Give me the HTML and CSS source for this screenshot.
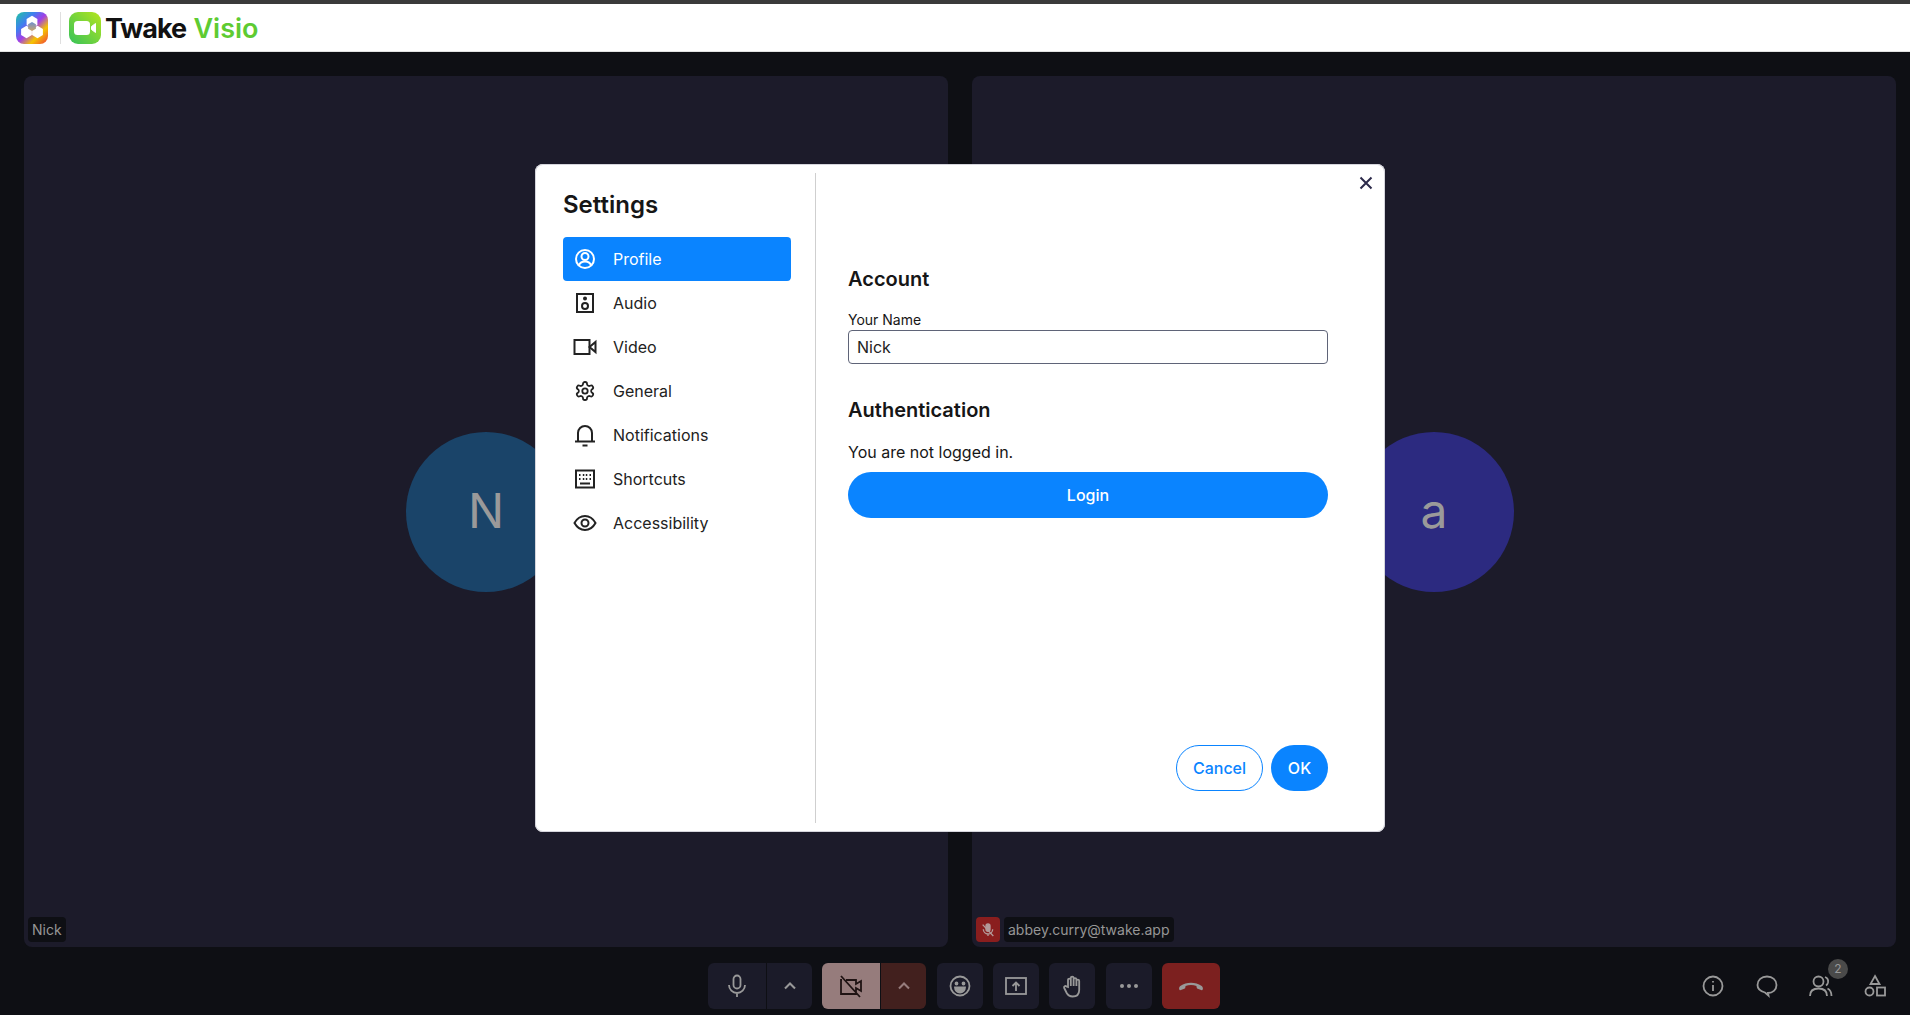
FILE: index.html
```html
<!DOCTYPE html>
<html lang="en">
<head>
    <meta charset="UTF-8">
    <title>Twake Visio</title>
    <link rel="stylesheet" href="styles.css">
</head>
<body>

<!-- Header -->
<header class="topbar">
    <svg class="logo" viewBox="0 0 32 32">
        <defs>
            <linearGradient id="appGrad" x1="0" y1="0" x2="1" y2="1">
                <stop offset="0" stop-color="#1fc7a0"/>
                <stop offset="0.3" stop-color="#3f7ff0"/>
                <stop offset="0.5" stop-color="#a03fe8"/>
                <stop offset="0.72" stop-color="#f5c400"/>
                <stop offset="1" stop-color="#f03c3c"/>
            </linearGradient>
            <linearGradient id="hexGrad" x1="0" y1="0" x2="0" y2="1">
                <stop offset="0" stop-color="#6f8fd0"/>
                <stop offset="1" stop-color="#c9a66a"/>
            </linearGradient>
        </defs>
        <rect width="32" height="32" rx="8" fill="url(#appGrad)"/>
        <polygon points="16,3.800 21.400,6.900 21.400,13.100 16,16.200 10.600,13.100 10.600,6.900" fill="#fff"/>
        <polygon points="10.500,13.800 15.900,16.900 15.900,23.100 10.500,26.200 5.100,23.100 5.100,16.900" fill="#fff"/>
        <polygon points="21.500,13.800 26.900,16.900 26.900,23.100 21.500,26.200 16.100,23.100 16.100,16.900" fill="#fff"/>
        <polygon points="16,10 19.900,12.250 19.900,16.750 16,19 12.100,16.750 12.100,12.250" fill="url(#hexGrad)"/>
    </svg>
    <span class="topbar-sep"></span>
    <svg class="logo" viewBox="0 0 32 32">
        <defs>
            <linearGradient id="visioGrad" x1="1" y1="0" x2="0" y2="1">
                <stop offset="0" stop-color="#b5e51d"/>
                <stop offset="1" stop-color="#35c25a"/>
            </linearGradient>
        </defs>
        <rect width="32" height="32" rx="9" fill="url(#visioGrad)"/>
        <rect x="5" y="9" width="16" height="14" rx="3.500" fill="#fff"/>
        <path d="M22.500 14.500l4-3v9l-4-3z" fill="#fff" stroke="#fff" stroke-linejoin="round"/>
    </svg>
    <span class="brand">Twake <span class="brand-green">Visio</span></span>
</header>

<!-- Call area -->
<main class="stage">
    <section class="tile">
        <div class="avatar avatar-blue">N</div>
        <div class="tile-label"><span class="tile-name">Nick</span></div>
    </section>
    <section class="tile">
        <div class="avatar avatar-indigo">a</div>
        <div class="tile-label">
            <span class="mic-off">
                <svg viewBox="0 0 24 24" class="mic-off-icon">
                    <rect x="9" y="3" width="6" height="11" rx="3" fill="currentColor"/>
                    <path d="M5 11a7 7 0 0 0 14 0M12 18v3M4 4l16 17"/>
                </svg>
            </span>
            <span class="tile-name">abbey.curry@twake.app</span>
        </div>
    </section>
</main>

<!-- Toolbar -->
<footer class="toolbar">
    <div></div>
    <div class="controls">
        <div class="split">
            <button class="ctl ctl-main">
                <svg viewBox="0 0 24 24"><rect x="8.500" y="1.500" width="7" height="13" rx="3.500"/><path d="M4 11a8 8 0 0 0 16 0M12 19v4"/></svg>
            </button>
            <button class="ctl ctl-arrow">
                <svg viewBox="0 0 24 24"><path d="M6 15l6-6 6 6"/></svg>
            </button>
        </div>
        <div class="split split-off">
            <button class="ctl ctl-main">
                <svg viewBox="0 0 24 24"><path d="M7 6h10v4l5-3v10l-5-3v6H2V6h1M2 2l19 21"/></svg>
            </button>
            <button class="ctl ctl-arrow">
                <svg viewBox="0 0 24 24"><path d="M6 15l6-6 6 6"/></svg>
            </button>
        </div>
        <button class="ctl ctl-single">
            <svg viewBox="0 0 24 24"><circle cx="12" cy="12" r="9.500"/><circle cx="8.500" cy="9.500" r="1" fill="currentColor"/><circle cx="15.500" cy="9.500" r="1" fill="currentColor"/><path d="M7 13.500h10a5 5 0 0 1-10 0z" fill="currentColor"/></svg>
        </button>
        <button class="ctl ctl-single">
            <svg viewBox="0 0 24 24"><rect x="2" y="4" width="20" height="16"/><path d="M12 17V9M8.500 12L12 8.500l3.500 3.500"/></svg>
        </button>
        <button class="ctl ctl-single">
            <svg viewBox="0 0 24 24"><path d="M8 13V6a1.400 1.400 0 0 1 2.800 0V4a1.400 1.400 0 0 1 2.800 0v1.500a1.400 1.400 0 0 1 2.800 0V7a1.400 1.400 0 0 1 2.800 0v9c0 4-2.500 6.500-6.500 6.500-3 0-4.800-1.300-6-3.500l-2.500-5c-.8-1.600 1.300-2.700 2.300-1.500zM10.800 6v6M13.600 5.500V12M16.400 6v6"/></svg>
        </button>
        <button class="ctl ctl-single">
            <svg viewBox="0 0 24 24"><circle cx="5" cy="12" r="2" class="dot"/><circle cx="12" cy="12" r="2" class="dot"/><circle cx="19" cy="12" r="2" class="dot"/></svg>
        </button>
        <button class="ctl ctl-hangup">
            <svg viewBox="0 0 24 24"><path d="M1 14.500c0-1 .5-2 1.500-2.700C5 10 8.500 9 12 9s7 1 9.500 2.800c1 .7 1.500 1.700 1.500 2.700 0 .8-.8 1.700-1.700 1.300l-3.100-1.200c-.7-.3-1-.8-1-1.500l-.2-1.200C15.500 11.300 13.800 11 12 11s-3.500.3-5 .9l-.2 1.200c0 .7-.3 1.200-1 1.500l-3.100 1.200c-.9.4-1.700-.5-1.700-1.300z" class="dot"/></svg>
        </button>
    </div>
    <div class="side-tools">
        <svg viewBox="0 0 24 24"><circle cx="12" cy="12" r="9.500"/><path d="M12 11v6M12 7v1.500"/></svg>
        <svg viewBox="0 0 24 24"><path d="M12 2.500c5.500 0 9.500 3.500 9.500 8.500s-4 8-8.500 8l.5 2.500-3.500-3C6 17.500 2.500 15 2.500 11 2.500 6 6.500 2.500 12 2.500z"/></svg>
        <div class="people">
            <svg viewBox="0 0 24 24"><circle cx="9.500" cy="7.500" r="5"/><path d="M1 22c0-5 3.500-7.500 8.500-7.500S18 17 18 22M16 3c2.500 1 3.500 3 3 5.500-.3 1.300-1 2.300-2 3M18.500 14.500c2.700 1.300 4 3.800 4 7.500"/></svg>
            <span class="count">2</span>
        </div>
        <svg viewBox="0 0 24 24"><path d="M12 2l4.500 8h-9z"/><circle cx="6.500" cy="17.500" r="4"/><rect x="14" y="13.500" width="8" height="8"/></svg>
    </div>
</footer>

<!-- Settings dialog -->
<div class="modal">
    <aside class="modal-side">
        <h2 class="modal-title">Settings</h2>
        <nav class="menu">
            <a class="menu-item active">
                <svg viewBox="0 0 24 24"><circle cx="12" cy="12" r="9"/><circle cx="12" cy="9.500" r="3.500"/><path d="M5.500 19c1-3 3.500-4.500 6.500-4.500s5.500 1.500 6.500 4.500"/></svg>
                Profile
            </a>
            <a class="menu-item">
                <svg viewBox="0 0 24 24"><rect x="4" y="3" width="16" height="18"/><circle cx="12" cy="15" r="3"/><circle cx="12" cy="7.500" r="1" fill="currentColor"/></svg>
                Audio
            </a>
            <a class="menu-item">
                <svg viewBox="0 0 24 24"><rect x="1.500" y="5" width="15" height="14"/><path d="M16.500 12l6-5v10z"/></svg>
                Video
            </a>
            <a class="menu-item">
                <svg viewBox="0 0 24 24"><g transform="translate(1.200 1.200) scale(.9)"><path d="M12.220 2h-.44a2 2 0 0 0-2 2v.18a2 2 0 0 1-1 1.730l-.43.250a2 2 0 0 1-2 0l-.15-.08a2 2 0 0 0-2.730.730l-.22.380a2 2 0 0 0 .730 2.730l.15.100a2 2 0 0 1 1 1.720v.510a2 2 0 0 1-1 1.740l-.15.090a2 2 0 0 0-.730 2.730l.22.380a2 2 0 0 0 2.730.730l.15-.08a2 2 0 0 1 2 0l.43.250a2 2 0 0 1 1 1.730V20a2 2 0 0 0 2 2h.44a2 2 0 0 0 2-2v-.18a2 2 0 0 1 1-1.730l.43-.25a2 2 0 0 1 2 0l.15.080a2 2 0 0 0 2.730-.730l.22-.390a2 2 0 0 0-.730-2.730l-.15-.080a2 2 0 0 1-1-1.740v-.5a2 2 0 0 1 1-1.740l.15-.090a2 2 0 0 0 .730-2.730l-.22-.380a2 2 0 0 0-2.730-.730l-.15.080a2 2 0 0 1-2 0l-.43-.250a2 2 0 0 1-1-1.730V4a2 2 0 0 0-2-2z"/><circle cx="12" cy="12" r="3"/></g></svg>
                General
            </a>
            <a class="menu-item">
                <svg viewBox="0 0 24 24"><path d="M2 18.500h20M5 18.500V10a7 7 0 0 1 14 0v8.500M9.500 22.500h5"/></svg>
                Notifications
            </a>
            <a class="menu-item">
                <svg viewBox="0 0 24 24"><rect x="3" y="3.500" width="18" height="17"/><path d="M6 8h1.500M9.800 8h1.500M12.800 8h1.500M16.500 8H18M6 12h1.500M9.800 12h1.500M12.800 12h1.500M16.500 12H18M7 16.500h10"/></svg>
                Shortcuts
            </a>
            <a class="menu-item">
                <svg viewBox="0 0 24 24"><path d="M1.500 12C4 7.500 7.500 5 12 5s8 2.500 10.500 7c-2.500 4.500-6 7-10.500 7s-8-2.500-10.500-7z"/><circle cx="12" cy="12" r="3.500"/></svg>
                Accessibility
            </a>
        </nav>
    </aside>
    <div class="modal-body">
        <button class="modal-close">
            <svg viewBox="0 0 14 14"><path d="M1.500 1.500l11 11M12.500 1.500l-11 11"/></svg>
        </button>
        <div class="panel">
            <h3 class="section-title">Account</h3>
            <label class="field-label">Your Name</label>
            <input class="field" type="text" value="Nick">
            <h3 class="section-title section-auth">Authentication</h3>
            <p class="auth-text">You are not logged in.</p>
            <button class="btn btn-login">Login</button>
        </div>
        <div class="modal-footer">
            <button class="btn btn-outline">Cancel</button>
            <button class="btn btn-ok">OK</button>
        </div>
    </div>
</div>

</body>
</html>
```

FILE: styles.css
```css
* {
    box-sizing: border-box;
}
html, body {
    height: 100%;
}
body {
    margin: 0;
    height: 1015px;
    display: flex;
    flex-direction: column;
    background-color: #0e0f14;
    font-family: Inter, "Liberation Sans", sans-serif;
    color: #161616;
    overflow: hidden;
}
button {
    font-family: inherit;
    border: none;
    padding: 0;
    cursor: pointer;
}

/* Header */
.topbar {
    height: 52px;
    display: flex;
    align-items: center;
    padding-left: 16px;
    background-color: #fff;
    border-top: 4px solid #3a3a3a;
    border-bottom: 1px solid #e2e2e2;
}
.logo {
    width: 32px;
    height: 32px;
    flex: none;
}
.topbar-sep {
    width: 1px;
    height: 32px;
    margin: 0 8px 0 12px;
    background-color: #dfdfdf;
}
.brand {
    margin: 2px 0 0 4px;
    font-size: 27px;
    font-weight: 700;
    letter-spacing: -1px;
    color: #111;
}
.brand-green {
    margin-left: 2px;
    letter-spacing: 0;
    font-weight: 600;
    color: #5ecb32;
}

/* Call area */
.stage {
    flex: 1;
    display: flex;
    gap: 24px;
    padding: 24px 14px 0 24px;
}
.tile {
    flex: 1;
    height: 871px;
    position: relative;
    display: flex;
    align-items: center;
    justify-content: center;
    background-color: #1c1b2a;
    border-radius: 8px;
}
.avatar {
    width: 160px;
    height: 160px;
    padding-bottom: 3px;
    border-radius: 50%;
    display: flex;
    align-items: center;
    justify-content: center;
    font-size: 48px;
    color: #9a9a9a;
}
.avatar-blue {
    background-color: #1a4469;
}
.avatar-indigo {
    background-color: #2c2a80;
}
.tile-label {
    position: absolute;
    left: 4px;
    bottom: 5px;
    display: flex;
    gap: 4px;
}
.tile-name {
    height: 25px;
    padding: 0 4px;
    line-height: 25px;
    font-size: 14px;
    color: #969696;
    background-color: #0e0f14;
    border-radius: 4px;
}
.mic-off {
    width: 24px;
    height: 25px;
    display: flex;
    align-items: center;
    justify-content: center;
    background-color: #8a1e1e;
    border-radius: 4px;
}
.mic-off-icon {
    width: 16px;
    height: 16px;
    fill: none;
    stroke: #b49a9a;
    stroke-width: 2;
    color: #b49a9a;
}

/* Toolbar */
.toolbar {
    height: 68px;
    display: grid;
    grid-template-columns: 1fr auto 1fr;
    align-items: center;
    padding: 10px 0 0 18px;
    color: #999;
}
.controls {
    display: flex;
    gap: 10.330px;
}
.controls svg, .side-tools svg {
    fill: none;
    stroke: currentColor;
    stroke-width: 1.800;
}
.split {
    display: flex;
    gap: 1px;
    border-radius: 6px;
    overflow: hidden;
}
.ctl {
    height: 46px;
    display: flex;
    align-items: center;
    justify-content: center;
    background-color: #1b1b29;
    color: #999;
}
.ctl svg {
    width: 24px;
    height: 24px;
}
.ctl-main {
    width: 58px;
}
.ctl-arrow {
    width: 45px;
}
.ctl-arrow svg {
    width: 20px;
    height: 20px;
    stroke-width: 2.500;
}
.ctl-single {
    width: 46px;
    border-radius: 6px;
}
.ctl-hangup {
    width: 58px;
    border-radius: 6px;
    background-color: #7c201f;
}
.ctl-hangup svg {
    width: 26px;
    height: 26px;
    stroke: none;
}
.controls .dot {
    fill: currentColor;
    stroke: none;
}
.split-off .ctl-main {
    background-color: #967c7c;
    color: #1f1313;
}
.split-off .ctl-arrow {
    background-color: #42201e;
    color: #967c7c;
}
.side-tools {
    display: flex;
    justify-content: flex-end;
    align-items: center;
    gap: 30px;
    padding-right: 23px;
}
.side-tools svg {
    width: 24px;
    height: 24px;
    flex: none;
    display: block;
}
.people {
    position: relative;
    width: 24px;
    height: 24px;
}
.count {
    position: absolute;
    top: -15px;
    left: 19px;
    width: 20px;
    height: 20px;
    border-radius: 50%;
    background-color: #4a4a4a;
    color: #999;
    font-size: 12px;
    line-height: 20px;
    text-align: center;
}

/* Settings dialog */
.modal {
    position: fixed;
    top: 164px;
    left: 535px;
    width: 850px;
    height: 668px;
    display: flex;
    background-color: #fff;
    border-radius: 8px;
    box-shadow: inset 0 0 0 1px #d5d5dc;
}
.modal-side {
    width: 281px;
    margin: 9px 0;
    padding: 13px 24px 0 28px;
    border-right: 1px solid #cfcfcf;
}
.modal-title {
    margin: 0 0 13px;
    font-size: 24px;
    line-height: 38px;
    font-weight: 600;
}
.menu {
    display: flex;
    flex-direction: column;
}
.menu-item {
    height: 44px;
    display: flex;
    align-items: center;
    gap: 16px;
    padding-left: 10px;
    font-size: 16px;
    color: #222;
    border-radius: 4px;
}
.menu-item svg {
    width: 24px;
    height: 24px;
    flex: none;
    fill: none;
    stroke: currentColor;
    stroke-width: 2;
}
.menu-item.active {
    background-color: #0a84ff;
    color: #fff;
}
.modal-body {
    flex: 1;
    position: relative;
    display: flex;
    flex-direction: column;
    padding: 101px 57px 41px 32px;
}
.modal-close {
    position: absolute;
    top: 12px;
    right: 12px;
    width: 14px;
    height: 14px;
    background: none;
}
.modal-close svg {
    display: block;
    fill: none;
    stroke: #2c2a4a;
    stroke-width: 2;
}
.panel {
    flex: 1;
}
.section-title {
    margin: 0;
    font-size: 20px;
    line-height: 28px;
    font-weight: 600;
}
.field-label {
    display: block;
    margin-top: 17px;
    font-size: 14px;
    line-height: 20px;
}
.field {
    display: block;
    width: 100%;
    height: 34px;
    padding: 0 8px;
    font-family: inherit;
    font-size: 16px;
    color: #222;
    border: 1px solid #5f6478;
    border-radius: 4px;
}
.section-auth {
    margin-top: 32px;
}
.auth-text {
    margin: 16px 0 0;
    font-size: 16px;
    line-height: 24px;
}
.btn {
    height: 46px;
    font-size: 16px;
    font-weight: 500;
    border-radius: 23px;
}
.btn-login {
    display: block;
    width: 100%;
    margin-top: 8px;
    background-color: #0a84ff;
    color: #fff;
}
.modal-footer {
    display: flex;
    justify-content: flex-end;
    gap: 8px;
}
.btn-outline {
    width: 87px;
    background-color: #fff;
    color: #0a84ff;
    border: 1px solid #0a84ff;
}
.btn-ok {
    width: 57px;
    background-color: #0a84ff;
    color: #fff;
}
```
